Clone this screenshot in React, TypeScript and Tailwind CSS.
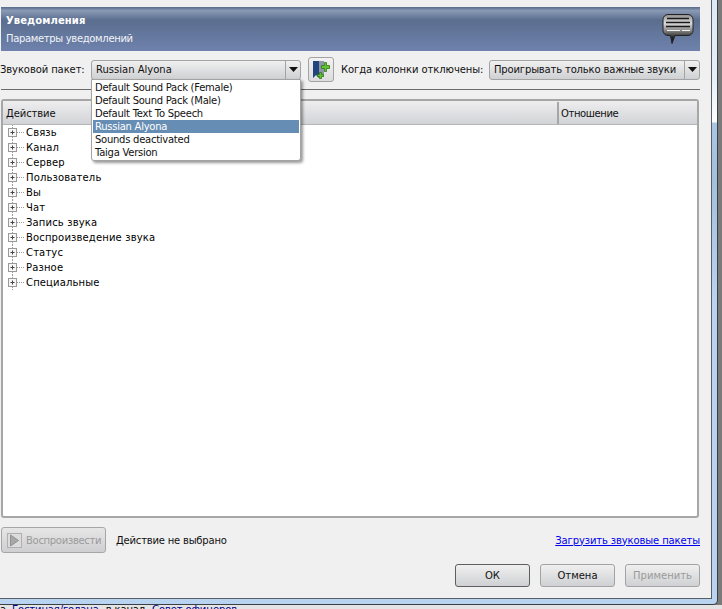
import React from "react";

const FONT = "font-['DejaVu_Sans',sans-serif] text-[10px]";

function Chevron() {
  return (
    <svg width="9" height="5" viewBox="0 0 9 5" className="block">
      <path d="M0 0h9L4.5 5z" fill="#111" />
    </svg>
  );
}

function Combo({ text, className, textClass }: { text: string; className: string; textClass?: string }) {
  return (
    <div className={`flex h-[20px] items-stretch rounded-[3px] border border-[#a3a3a3] bg-gradient-to-b from-[#f0f0f0] to-[#cfd0d3] ${className}`}>
      <div className={`flex flex-1 items-center pl-[4px] text-[#111] ${textClass ?? ""}`}>{text}</div>
      <div className="flex w-[15px] items-center justify-center border-l border-[#a3a3a3]">
        <Chevron />
      </div>
    </div>
  );
}

function Expander() {
  return (
    <svg width="19" height="15" viewBox="0 0 19 15" className="block shrink-0">
      <path d="M5.5 0v15" stroke="#9a9a9a" strokeDasharray="1 1" fill="none" />
      <path d="M10 7.5h8" stroke="#9a9a9a" strokeDasharray="1 1" fill="none" />
      <rect x="1.5" y="3.5" width="8" height="8" fill="#f6f6f6" stroke="#9a9a9a" />
      <path d="M3.5 7.5h4M5.5 5.5v4" stroke="#444" fill="none" />
    </svg>
  );
}

function Bubble() {
  return (
    <svg width="32" height="30" viewBox="0 0 32 30" className="block">
      <defs>
        <linearGradient id="bub" x1="0" y1="0" x2="0" y2="1">
          <stop offset="0" stopColor="#8f8f8f" />
          <stop offset="0.3" stopColor="#dcdcdc" />
          <stop offset="0.55" stopColor="#8a8a8a" />
          <stop offset="0.8" stopColor="#1f1f1f" />
        </linearGradient>
      </defs>
      <path d="M6 .5h20a5 5 0 0 1 5 5v11a5 5 0 0 1-5 5H13l-3 8-1.500-8H6a5 5 0 0 1-5-5v-11a5 5 0 0 1 5-5z" fill="url(#bub)" stroke="#222" />
      <path d="M5 4.500h22M4 8.500h24M4 12.500h24" stroke="#1a1a1a" strokeWidth="1.300" />
      <path d="M5 16.500h13M20 16.500h8" stroke="#f2f2f2" strokeWidth="1.200" />
    </svg>
  );
}

function AddIcon() {
  return (
    <svg width="20" height="20" viewBox="0 0 20 20" className="block">
      <path d="M2 1h6v17l-3-3-3 3z" fill="#23457f" />
      <path d="M8 1h5v16l-3-3-2 2z" fill="#8d96a6" />
      <path d="M13.500 2.500h2v3h3v3h-3v3h-2v-3h-3v-3h3z" fill="#62c22f" stroke="#2c7a15" strokeWidth="0.800" />
      <path d="M8.500 12.500h2v2h2v2h-2v2h-2v-2h-2v-2h2z" fill="#62c22f" stroke="#2c7a15" strokeWidth="0.800" />
    </svg>
  );
}

function PlayIcon() {
  return (
    <svg width="15" height="15" viewBox="0 0 15 15" className="block">
      <rect x="0.500" y="0.500" width="14" height="14" fill="#dcdcdc" stroke="#b0b0b0" />
      <path d="M3.500 2l8 5.500-8 5.500z" fill="#a8a8a8" stroke="#929292" />
    </svg>
  );
}

function Btn({ children, className }: { children: React.ReactNode; className?: string }) {
  return (
    <div className={`flex h-[23px] w-[75px] items-center justify-center rounded-[3px] border bg-gradient-to-b from-[#f0f0f0] to-[#cfd0d3] ${className}`}>
      {children}
    </div>
  );
}

const tree = ["Связь", "Канал", "Сервер", "Пользователь", "Вы", "Чат", "Запись звука", "Воспроизведение звука", "Статус", "Разное", "Специальные"];
const packs = ["Default Sound Pack (Female)", "Default Sound Pack (Male)", "Default Text To Speech", "Russian Alyona", "Sounds deactivated", "Taiga Version"];

export default function App() {
  return (
    <div className={`${FONT} relative h-[609px] w-[722px] overflow-hidden bg-[#7a7a7a] text-black`}>
      <div className="h-[605px] w-[718px] rounded-br-[5px] border-r border-b border-[#3c3f44] bg-[linear-gradient(to_bottom,#dce9f6_0px,#e6eff8_80px,#fdfeff_122px,#a9c6e4_123px,#a3c0dd_180px,#b9d4f0_300px)]">
        <div className="h-[599px] w-[712px] border-r border-b border-[#5a5f66] bg-[#f0f0f0] pt-[7px] pl-[1px]">
          <div className="flex h-[44px] w-[699px] justify-between bg-[linear-gradient(to_bottom,#56698a_0%,#8a9ab5_8%,#5b6e8f_30%,#6e82ad_100%)] pl-[5px] pr-[6px]">
            <div className="pt-[6px]">
              <div className="font-bold tracking-[0.1px] text-white">Уведомления</div>
              <div className="mt-[3px] tracking-[-0.33px] text-[#f2f4f8]">Параметры уведомлений</div>
            </div>
            <div className="pt-[7px]"><Bubble /></div>
          </div>

          <div className="mt-[6px] flex h-[25px] w-[699px] items-center">
            <span className="-ml-px w-[91px] tracking-[-0.1px] text-[#111]">Звуковой пакет:</span>
            <Combo text="Russian Alyona" className="w-[210px]" />
            <div className="ml-[7px] flex h-[25px] w-[26px] items-center justify-center rounded-[3px] border border-[#a3a3a3] bg-gradient-to-b from-[#f2f2f2] to-[#dcdcdc]">
              <AddIcon />
            </div>
            <span className="ml-[7px] w-[148px] tracking-[-0.08px] text-[#111]">Когда колонки отключены:</span>
            <Combo text="Проигрывать только важные звуки" textClass="tracking-[-0.16px]" className="w-[211px]" />
          </div>

          <div className="mt-[7px] h-px w-[699px] bg-[#6b6b6b]" />

          <div className="mt-[9px] h-[419px] w-[698px] overflow-hidden rounded-[3px] border-2 border-[#a6a6a6] bg-white">
            <div className="flex h-[24px] border-b border-[#b5b5b5] bg-gradient-to-b from-[#eeeeef] to-[#d2d3d7] pt-[1px]">
              <div className="flex w-[556px] items-center border-r-2 border-[#a6a6a6] pl-[3px] tracking-[-0.1px] text-[#111]">Действие</div>
              <div className="flex flex-1 items-center pl-[2px] tracking-[-0.4px] text-[#111]">Отношение</div>
            </div>
            <div className="pl-[4px]">
              {tree.map((t) => (
                <div key={t} className="flex h-[15px] items-center">
                  <Expander />
                  <span className="tracking-[0.15px]">{t}</span>
                </div>
              ))}
            </div>
          </div>

          <div className="mt-[9px] flex h-[26px] w-[699px] items-center">
            <div className="flex h-[26px] w-[105px] items-center rounded-[3px] border border-[#a6a6a6] bg-gradient-to-b from-[#e6e6e6] to-[#cfcfd2] pl-[5px] text-[#9a9a9a]">
              <PlayIcon />
              <span className="ml-[4px] tracking-[-0.3px]">Воспроизвести</span>
            </div>
            <span className="ml-[10px] tracking-[-0.2px] text-[#111]">Действие не выбрано</span>
            <a className="ml-auto tracking-[-0.12px] text-[#0000ee] underline">Загрузить звуковые пакеты</a>
          </div>

          <div className="mt-[11px] flex w-[699px] justify-end gap-[10px]">
            <Btn className="border-[#5e5e5e] text-[#111]">ОК</Btn>
            <Btn className="border-[#a3a3a3] text-[#111]">Отмена</Btn>
            <Btn className="border-[#a3a3a3] text-[#9a9a9a]">Применить</Btn>
          </div>
        </div>
      </div>
      <div className="flex h-[4px] overflow-hidden whitespace-nowrap bg-[#e4e4e4] leading-[9px] tracking-[-0.13px] text-[#00008b]">
        <span className="text-black">а</span>
        <span className="ml-[6px]">Гостиная/голана</span>
        <span className="ml-[7px] text-black">в канал</span>
        <span className="ml-[7px]">Совет офицеров</span>
      </div>

      <div className="absolute left-[91px] top-[79px] w-[210px] rounded-b-[3px] border border-[#a3a3a3] bg-white p-px tracking-[-0.26px] shadow-[2px_2px_3px_rgba(0,0,0,0.4)]">
        {packs.map((p) => (
          <div key={p} className={`flex h-[13px] items-center pl-[2px] ${p === "Russian Alyona" ? "bg-[#668db3] text-white" : "text-[#111]"}`}>{p}</div>
        ))}
      </div>
    </div>
  );
}
